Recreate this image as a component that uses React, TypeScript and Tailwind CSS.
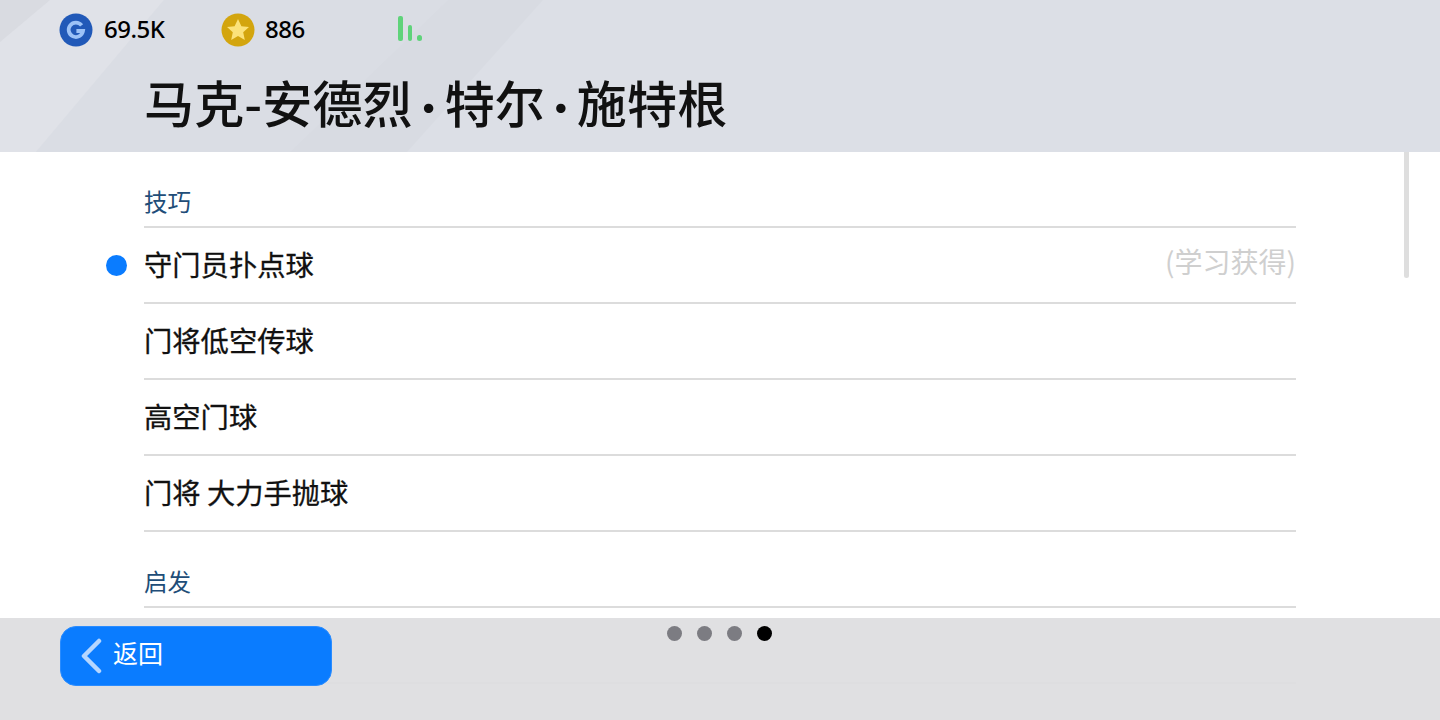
import React from "react";

const cjk = "font-['Noto_Sans_CJK_SC','Noto_Sans',sans-serif]";

type Section = { title: string; skills: { name: string; active?: boolean; note?: string }[] };

const sections: Section[] = [
  {
    title: "技巧",
    skills: [
      { name: "守门员扑点球", active: true, note: "(学习获得)" },
      { name: "门将低空传球" },
      { name: "高空门球" },
      { name: "门将 大力手抛球" },
    ],
  },
  { title: "启发", skills: [{ name: "" }] },
];

function HeaderBackground() {
  return (
    <svg className="absolute inset-0 h-full w-full" viewBox="0 0 1440 152" preserveAspectRatio="none">
      <rect width="1440" height="152" fill="#dcdfe6" />
      <polygon points="0,152 36,152 164,0 0,0" fill="#e0e2e8" />
      <polygon points="0,42 50,0 0,0" fill="#d9dbe1" />
      <polygon points="36,152 164,0 448,0 290,152" fill="#dadde4" />
      <polygon points="290,152 448,0 543,0 407,152" fill="#d8dbe2" />
    </svg>
  );
}

function CoinG() {
  return (
    <svg width="34" height="34" viewBox="0 0 34 34">
      <circle cx="17" cy="17" r="16.5" fill="#2159b8" />
      <path d="M22.6 12.4A7.2 7.2 0 1 0 24 18H17.4" fill="none" stroke="#9cc2f7" strokeWidth="3.8" />
    </svg>
  );
}

function CoinStar() {
  return (
    <svg width="34" height="34" viewBox="0 0 34 34">
      <circle cx="17" cy="17" r="16.5" fill="#d3a50e" />
      <polygon points="17,6 20.4,13.2 28,14.1 22.2,19.3 23.8,27 17,23 10.2,27 11.8,19.3 6,14.1 13.6,13.2" fill="#fbe27a" />
    </svg>
  );
}

function SignalBars() {
  return (
    <svg width="26" height="28" viewBox="0 0 26 28">
      <rect x="1" y="0" width="5" height="25" rx="2" fill="#5fd37a" />
      <rect x="11" y="9" width="4" height="16" rx="2" fill="#5fd37a" />
      <rect x="20" y="19" width="5" height="6" rx="2.5" fill="#5fd37a" />
    </svg>
  );
}

function Dot() {
  return <span className="mx-[9px] font-['Lato',sans-serif] font-bold">·</span>;
}

export default function App() {
  return (
    <div className={`relative h-[720px] w-[1440px] overflow-hidden bg-white ${cjk}`}>
      <header className="relative h-[152px]">
        <HeaderBackground />
        <div className="relative flex h-[60px] items-center pl-[59px] text-[24px] font-medium text-black">
          <CoinG />
          <span className="mb-[2px] ml-[11px] w-[117px] font-['Noto_Sans',sans-serif] leading-none tracking-[-0.5px]">69.5K</span>
          <CoinStar />
          <span className="mb-[2px] ml-[10px] w-[132px] font-['Noto_Sans',sans-serif] leading-none tracking-[-0.5px]">886</span>
          <SignalBars />
        </div>
        <h1 className="relative mt-[-3px] pl-[144px] text-[50px] leading-[88px] font-medium tracking-[0.15px] text-[#111]">
          马克-安德烈<Dot />特尔<Dot />施特根
        </h1>
      </header>

      <main className="h-[568px] overflow-hidden pl-[144px] pr-[144px]">
        {sections.map((section) => (
          <section key={section.title}>
            <h2 className="flex h-[76px] items-end border-b-2 border-[#dcdcdc] pb-[8px] text-[23.5px] leading-[34px] text-[#214d78]">
              {section.title}
            </h2>
            {section.skills.map((skill, i) => (
              <div key={i} className="relative flex h-[76px] items-center justify-between border-b-2 border-[#dcdcdc] pb-[2px] text-[28.3px] text-[#111] [-webkit-text-stroke:0.3px_#111]">
                {skill.active && (
                  <span className="absolute left-[-38px] top-[27px] h-[21px] w-[21px] rounded-full bg-[#0a7cff]" />
                )}
                <span>{skill.name}</span>
                {skill.note && <span className="mb-[6px] text-[28px] text-[#cfcfcf] [-webkit-text-stroke:0]">{skill.note}</span>}
              </div>
            ))}
          </section>
        ))}
      </main>

      {/* scrollbar */}
      <div className="absolute left-[1404px] top-[152px] h-[126px] w-[5px] rounded-b-sm bg-[#dedede]" />

      {/* translucent footer over the list */}
      <footer className="absolute inset-x-0 bottom-0 h-[102px] bg-[#dedee0]/93">
        <button className="absolute left-[60px] top-[8px] flex h-[60px] w-[272px] items-center rounded-[16px] border border-[#2a8cff] bg-[#0a7cff] pl-[19px] text-white">
          <svg width="22" height="36" viewBox="0 0 22 36">
            <path d="M19 3 4 18l15 15" fill="none" stroke="#b5d6ff" strokeWidth="4.5" strokeLinecap="round" strokeLinejoin="round" />
          </svg>
          <span className="mb-[8px] ml-[11px] text-[25px] leading-none">返回</span>
        </button>
        <div className="ml-[667px] flex gap-[15px] pt-[8px]">
          <span className="h-[15px] w-[15px] rounded-full bg-[#7c7c82]" />
          <span className="h-[15px] w-[15px] rounded-full bg-[#7c7c82]" />
          <span className="h-[15px] w-[15px] rounded-full bg-[#7c7c82]" />
          <span className="h-[15px] w-[15px] rounded-full bg-black" />
        </div>
      </footer>
    </div>
  );
}
